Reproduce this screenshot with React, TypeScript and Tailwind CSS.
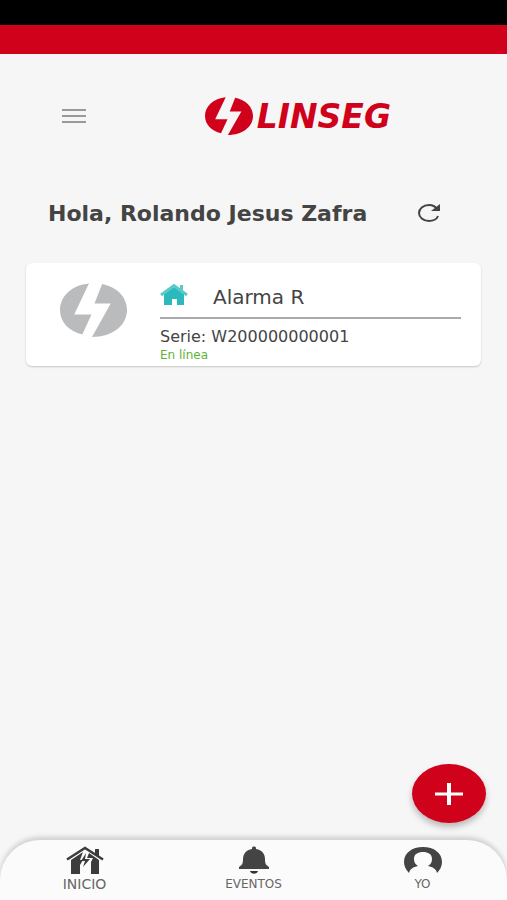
import React from "react";

const Bolt: React.FC<{ className?: string }> = ({ className }) => (
  <svg viewBox="0 0 66 54" preserveAspectRatio="none" className={className} aria-hidden="true">
    <path
      fill="currentColor"
      d="M28.500 0.500C12 2 0 13 0 27c0 12 9 21.500 22 24.500L31 31.500H14L28.500 0.500Z"
    />
    <path
      fill="currentColor"
      d="M41.500 1C56 4 66 14 66 27c0 15-14 27-34.500 27L50 20.500H34L41.500 1Z"
    />
  </svg>
);

const HomeIcon: React.FC = () => (
  <svg viewBox="0 0 28 24" className="h-6 w-7" aria-hidden="true">
    <path fill="#2bb9bd" d="M4 11 14 4l10 7v11h-7v-6h-5v6H4V11Z" />
    <path fill="none" stroke="#5cc9cb" strokeWidth="3" d="M1 12 14 2.500 27 12" />
    <path fill="#5cc9cb" d="M20 2h3v6l-3-2V2Z" />
  </svg>
);

const HouseBoltIcon: React.FC = () => (
  <svg viewBox="0 0 38 28" className="h-7 w-[38px]" aria-hidden="true">
    <path fill="none" stroke="#3c3c3c" strokeWidth="2.500" d="M1 13.500 19 2l18 11.500" />
    <path fill="#3c3c3c" d="M29 3h4v8l-4-3V3Z" />
    <path fill="#3c3c3c" d="M5 14 17 6l-3 8h3l-3 5v9H5V14ZM23 7l10 7v14h-8V16l2-4h-6l2-5Z" />
    <path fill="#3c3c3c" d="m20 7-5 8h4l-2 6 7-8h-5l1-6Z" />
  </svg>
);

const BellIcon: React.FC = () => (
  <svg viewBox="0 0 32 28" className="h-7 w-8" aria-hidden="true">
    <path
      fill="#444"
      d="M14 2c0-2 4-2 4 0v1c6 1 9 5 9 10 0 5 1 6 4 8v2H1v-2c3-2 4-3 4-8C5 8 8 4 14 3V2Z"
    />
    <path fill="#333" d="M12 25h8c-1 3.500-7 3.500-8 0Z" />
  </svg>
);

const UserIcon: React.FC = () => (
  <svg viewBox="0 0 40 28" className="h-7 w-10" aria-hidden="true">
    <path
      fill="#444"
      fillRule="evenodd"
      d="M6 27C3 24 1 20 1 16 1 7 9 1 20 1s19 6 19 15c0 4-2 8-5 11-1-4-4-6-9-7 3-2 4-4 4-7 0-5-4-7-9-7s-9 2-9 7c0 3 1 5 4 7-5 1-8 3-9 7Z"
    />
  </svg>
);

const tabs = [
  { label: "INICIO", icon: <HouseBoltIcon />, text: "text-[14px]" },
  { label: "EVENTOS", icon: <BellIcon />, text: "text-[12px]" },
  { label: "YO", icon: <UserIcon />, text: "text-[12px]" },
];

const App: React.FC = () => {
  return (
    <div className="flex min-h-screen flex-col overflow-hidden bg-[#f6f6f6] font-['DejaVu_Sans',sans-serif] text-[#444]">
      <div className="h-[25px] bg-black"></div>
      <div className="h-[29px] bg-[#d0021b]"></div>

      <header className="flex h-[124px] items-center justify-between pr-[116px] pl-[62px]">
        <button type="button" aria-label="Menu" className="flex w-6 flex-col gap-1">
          <span className="h-0.5 bg-[#999]"></span>
          <span className="h-0.5 bg-[#999]"></span>
          <span className="h-0.5 bg-[#999]"></span>
        </button>
        <div className="flex items-center gap-1 text-[#d0021b]">
          <Bolt className="h-[38px] w-12" />
          <span className="text-[33px] leading-none font-bold italic">LINSEG</span>
        </div>
      </header>

      <main className="relative flex-1">
        <div className="flex h-[70px] items-center justify-between pr-[66px] pl-12">
          <h1 className="text-[22px] font-bold whitespace-nowrap">Hola, Rolando Jesus Zafra</h1>
          <button type="button" aria-label="Actualizar">
            <svg viewBox="0 0 24 20" className="h-5 w-6" aria-hidden="true">
              <path
                fill="none"
                stroke="#444"
                strokeWidth="2"
                d="M21 13c-1 3-5 5-9 5-6 0-10-4-10-8s4-8 10-8c4 0 7 2 9 5"
              />
              <path fill="#444" d="M23 1v7h-9l9-7Z" />
            </svg>
          </button>
        </div>

        {/* Device card */}
        <section className="mx-[26px] mt-[15px] flex h-[103px] rounded-md bg-white pr-5 shadow-[0_1px_2px_rgba(0,0,0,0.2)]">
          <div className="w-[134px] shrink-0 pt-5 pl-[34px] text-[#b9bbbd]">
            <Bolt className="h-[54px] w-[67px]" />
          </div>
          <div className="flex-1 pt-5">
            <div className="flex h-9 items-start gap-[25px] border-b-2 border-[#aaa]">
              <HomeIcon />
              <h2 className="text-[20px] leading-7">Alarma R</h2>
            </div>
            <p className="mt-2 text-[16px] leading-5">Serie: W200000000001</p>
            <p className="text-[12px] leading-4 text-[#62b236]">En línea</p>
          </div>
        </section>

        <button
          type="button"
          aria-label="Agregar"
          className="absolute right-[21px] bottom-[17px] flex h-[59px] w-[74px] items-center justify-center rounded-[50%] bg-[#d0021b] shadow-[0_4px_6px_rgba(0,0,0,0.25)]"
        >
          <svg viewBox="0 0 28 22" className="h-[22px] w-7" aria-hidden="true">
            <path stroke="#fff" strokeWidth="3" d="M0 11h28" />
            <path stroke="#fff" strokeWidth="4" d="M14 0v22" />
          </svg>
        </button>
      </main>

      <nav className="grid h-[60px] grid-cols-3 rounded-t-[40px] bg-[#fbfbfb] shadow-[0_-3px_5px_rgba(0,0,0,0.16)]">
        {tabs.map((tab) => (
          <a key={tab.label} href="#" className="flex flex-col items-center pt-1.5 text-[#666]">
            {tab.icon}
            <span className={`${tab.text} leading-5`}>{tab.label}</span>
          </a>
        ))}
      </nav>
    </div>
  );
};

export default App;
